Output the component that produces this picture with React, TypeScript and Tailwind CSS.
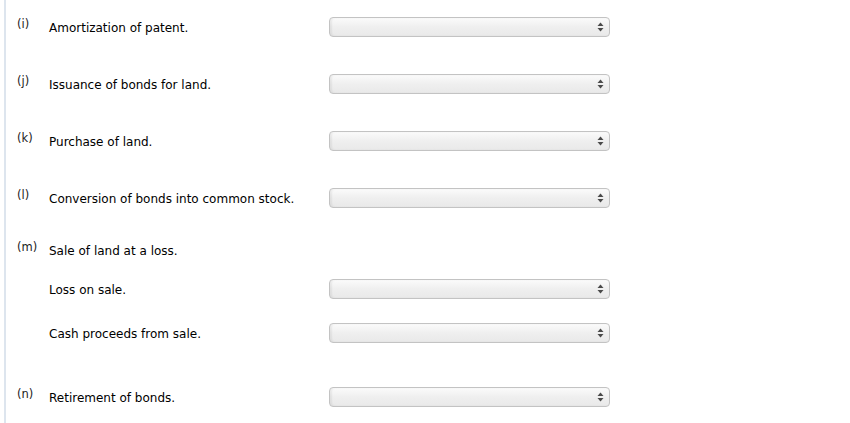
import React from "react";

type Row = {
  label?: string;
  text: string;
  select: boolean;
  gap: string;
};

const rows: Row[] = [
  { label: "(i)", text: "Amortization of patent.", select: true, gap: "mt-0" },
  { label: "(j)", text: "Issuance of bonds for land.", select: true, gap: "mt-[37px]" },
  { label: "(k)", text: "Purchase of land.", select: true, gap: "mt-[37px]" },
  { label: "(l)", text: "Conversion of bonds into common stock.", select: true, gap: "mt-[37px]" },
  { label: "(m)", text: "Sale of land at a loss.", select: false, gap: "mt-[32px]" },
  { text: "Loss on sale.", select: true, gap: "mt-[19px]" },
  { text: "Cash proceeds from sale.", select: true, gap: "mt-[24px]" },
  { label: "(n)", text: "Retirement of bonds.", select: true, gap: "mt-[44px]" },
];

function FakeSelect() {
  return (
    <div className="relative h-5 w-[281px] rounded-[4px] border border-[#c3c3c3] bg-gradient-to-b from-[#fbfbfb] via-[#efefef] to-[#e9e9e9] shadow-[inset_2px_0_2px_rgba(0,0,0,0.06)]">
      <svg
        className="absolute right-[5px] top-[4px]"
        width="7"
        height="10"
        viewBox="0 0 7 10"
      >
        <path d="M3.5 0.5 L6.5 4 H0.5 Z" fill="#4a4a4a" />
        <path d="M3.5 9.5 L6.5 6 H0.5 Z" fill="#4a4a4a" />
      </svg>
    </div>
  );
}

export default function App() {
  return (
    <div className="h-[423px] w-[850px] bg-white">
      <div className="ml-[4px] h-full border-l-2 border-[#dde5ee] pl-[11px] pt-[17px] font-['DejaVu_Sans',Verdana,sans-serif] text-black">
        {rows.map((row) => (
          <div key={row.text} className={`flex h-5 items-center ${row.gap}`}>
            <span className="w-[32px] -translate-y-[2px] text-[11.5px] leading-none text-[#222]">
              {row.label ?? ""}
            </span>
            <span className="w-[280px] translate-y-[1px] text-[12px] leading-none">{row.text}</span>
            {row.select && <FakeSelect />}
          </div>
        ))}
      </div>
    </div>
  );
}
